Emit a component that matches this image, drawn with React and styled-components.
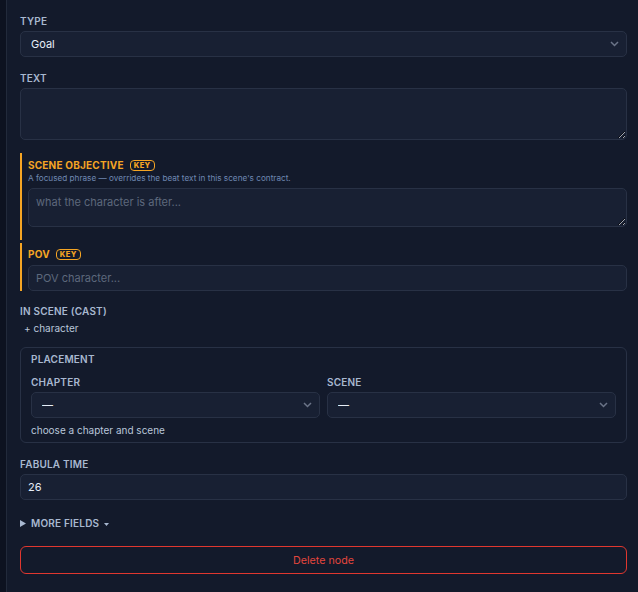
import styled, { createGlobalStyle } from "styled-components";

const GlobalStyle = createGlobalStyle`
    * { box-sizing: border-box; }
    html, body {
        margin: 0;
        background: #0d1220;
        font-family: Inter, "Noto Sans", "Liberation Sans", sans-serif;
    }
`

const Layout = styled.div`
    display: flex;
    min-height: 592px;
`

const Gutter = styled.div`
    width: 6px;
    flex-shrink: 0;
    background: #0d1220;
`

const Panel = styled.div`
    flex: 1;
    background: #131a2b;
    border-left: 1px solid #222a3b;
    padding: 15px 11px 18px 13px;
    display: flex;
    flex-direction: column;
`

const Label = styled.div`
    font-size: 10px;
    line-height: 12px;
    letter-spacing: 0.02em;
    text-transform: uppercase;
    color: ${(p) => (p.$accent ? "#f5a524" : "#a8b8d0")};
    font-weight: ${(p) => (p.$accent ? 700 : 600)};
    margin-top: ${(p) => p.$mt || 0}px;
    margin-bottom: ${(p) => (p.$mb !== undefined ? p.$mb : 4)}px;
    display: flex;
    align-items: center;
    gap: 6px;
`

const KeyBadge = styled.span`
    font-size: 7.5px;
    line-height: 9px;
    font-weight: 800;
    letter-spacing: 0.05em;
    color: #f5a524;
    border: 1px solid #f5a524;
    border-radius: 4px;
    padding: 0 3px;
`

const SelectWrap = styled.div`
    position: relative;
    flex: 1;
`

const Select = styled.select`
    appearance: none;
    width: 100%;
    height: 26px;
    background: #182033;
    border: 1px solid #283145;
    border-radius: 5px;
    color: #e6edf8;
    font-family: inherit;
    font-size: 11px;
    padding: 0 24px 0 10px;
    outline: none;
`

const Chevron = styled.svg`
    position: absolute;
    right: 8px;
    top: 10px;
    pointer-events: none;
`

const TextArea = styled.textarea`
    display: block;
    width: 100%;
    height: ${(p) => p.$h}px;
    background: #182033;
    border: 1px solid #283145;
    border-radius: 5px;
    color: #e6edf8;
    font-family: inherit;
    font-size: 11px;
    padding: 6px 7px;
    outline: none;
    resize: vertical;
    color-scheme: dark;
    &::placeholder { color: #5d687c; }
`

const Input = styled.input`
    display: block;
    width: 100%;
    height: 26px;
    background: #182033;
    border: 1px solid #283145;
    border-radius: 5px;
    color: #e6edf8;
    font-family: inherit;
    font-size: 11px;
    padding: 0 7px;
    outline: none;
    &::placeholder { color: #5d687c; }
`

const KeySection = styled.div`
    border-left: 2px solid #f5a524;
    padding: ${(p) => p.$pt}px 0 ${(p) => p.$pb || 0}px 6px;
    margin-top: ${(p) => p.$mt || 0}px;
`

const Hint = styled.div`
    font-size: 8.2px;
    line-height: 12px;
    color: #6f88b2;
    margin: -2px 0 4px;
`

const AddLink = styled.div`
    font-size: 10px;
    line-height: 14px;
    color: #b9c6da;
    margin-left: 4px;
`

const Box = styled.div`
    margin-top: 12px;
    border: 1px solid #283145;
    border-radius: 6px;
    padding: 5px 10px 5px;
`

const Row = styled.div`
    display: flex;
    gap: 7px;
`

const Col = styled.div`
    flex: 1;
    display: flex;
    flex-direction: column;
`

const Note = styled.div`
    font-size: 10px;
    line-height: 14px;
    color: #b9c6da;
    margin-top: 5px;
`

const MoreToggle = styled.div`
    margin-top: 17px;
    display: flex;
    align-items: center;
    gap: 5px;
    font-size: 10px;
    line-height: 12px;
    font-weight: 600;
    letter-spacing: 0.02em;
    color: #a8b8d0;
`

const Tri = styled.svg`
    flex-shrink: 0;
`

const Caret = styled.svg`
    margin-left: 5px;
    vertical-align: middle;
`

const DeleteButton = styled.button`
    margin-top: 17px;
    height: 28px;
    width: 100%;
    background: transparent;
    border: 1px solid #e0372f;
    border-radius: 6px;
    color: #e4463d;
    font-family: inherit;
    font-size: 10.7px;
`

function Dropdown({ value }) {
    return (
        <SelectWrap>
            <Select defaultValue={value}>
                <option value={value}>{value}</option>
            </Select>
            <Chevron width="9" height="6" viewBox="0 0 9 6">
                <path d="M1 1 L4.5 4.5 L8 1" fill="none" stroke="#6b7488" strokeWidth="1.5" />
            </Chevron>
        </SelectWrap>
    )
}

function App() {
    return (
        <>
            <GlobalStyle />
            <Layout>
                <Gutter />
                <Panel>
                    <Label>Type</Label>
                    <Dropdown value="Goal" />

                    <Label $mt={13}>Text</Label>
                    <TextArea $h={52} />

                    <KeySection $mt={13} $pt={6} $pb={13}>
                        <Label $accent $mb={3}>Scene objective <KeyBadge>KEY</KeyBadge></Label>
                        <Hint>A focused phrase — overrides the beat text in this scene's contract.</Hint>
                        <TextArea $h={39} placeholder="what the character is after..." />
                    </KeySection>

                    <KeySection $mt={3} $pt={5}>
                        <Label $accent $mb={5}>POV <KeyBadge>KEY</KeyBadge></Label>
                        <Input placeholder="POV character..." />
                    </KeySection>

                    <Label $mt={14}>In scene (cast)</Label>
                    <AddLink>+ character</AddLink>

                    <Box>
                        <Label $mb={11}>Placement</Label>
                        <Row>
                            <Col>
                                <Label>Chapter</Label>
                                <Dropdown value="—" />
                            </Col>
                            <Col>
                                <Label>Scene</Label>
                                <Dropdown value="—" />
                            </Col>
                        </Row>
                        <Note>choose a chapter and scene</Note>
                    </Box>

                    <Label $mt={15}>Fabula time</Label>
                    <Input defaultValue="26" />

                    <MoreToggle>
                        <Tri width="6" height="7" viewBox="0 0 6 7">
                            <path d="M0 0 L6 3.5 L0 7 Z" fill="#a8b8d0" />
                        </Tri>
                        <span>
                            MORE FIELDS
                            <Caret width="5" height="3" viewBox="0 0 5 3">
                                <path d="M0 0 L5 0 L2.5 3 Z" fill="#a8b8d0" />
                            </Caret>
                        </span>
                    </MoreToggle>

                    <DeleteButton>Delete node</DeleteButton>
                </Panel>
            </Layout>
        </>
    )
}

export default App;
